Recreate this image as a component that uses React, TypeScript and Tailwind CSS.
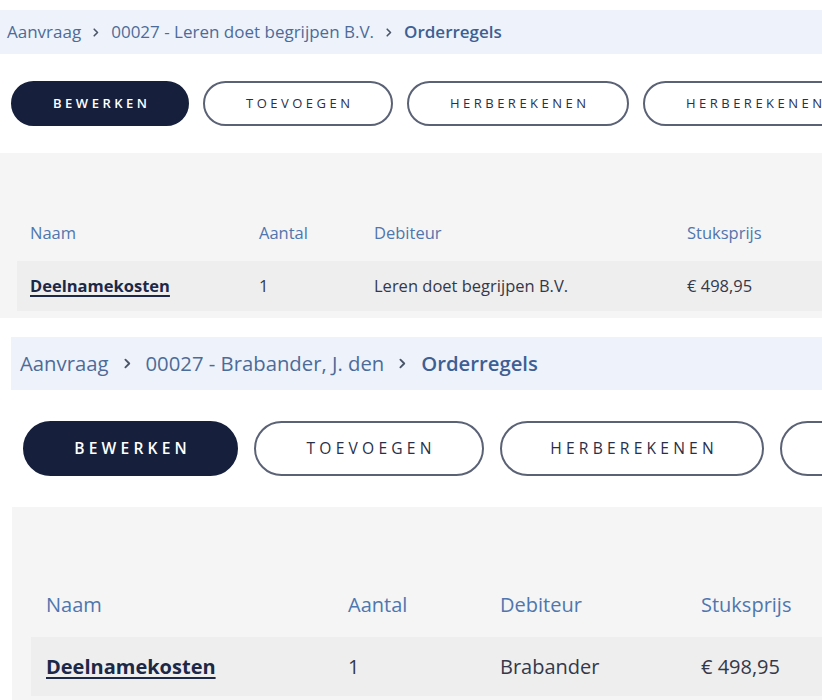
import React from "react";

type Size = "sm" | "lg";

const cls = {
  sm: {
    section: "pt-[10px]",
    band: "h-[44px] pl-[7px] text-[17px]",
    crumbGap: "gap-[12px]",
    chevron: "w-[6px] h-[9px]",
    buttons: "mt-[27px] pl-[11px] gap-[14px]",
    btn: "h-[45px] text-[13px] tracking-[3.5px] border-2",
    panel: "mt-[27px] h-[165px] pt-[68px]",
    head: "h-[24px] text-[16.5px] pl-[30px]",
    row: "mt-[16px] ml-[17px] h-[50px] pl-[13px] text-[16.5px]",
  },
  lg: {
    section: "pt-[19px] pl-[11px]",
    band: "h-[53px] pl-[9px] text-[20.3px]",
    crumbGap: "gap-[15px]",
    chevron: "w-[7px] h-[11px]",
    buttons: "mt-[31px] pl-[12px] gap-[16px]",
    btn: "h-[55px] text-[15.6px] tracking-[4.2px] border-[2.5px]",
    panel: "mt-[31px] ml-[1px] h-[200px] pt-[83px]",
    head: "h-[28px] text-[20px] pl-[34px]",
    row: "mt-[19px] ml-[19px] h-[59px] pl-[15px] text-[20px]",
  },
};

const widths = {
  sm: { btn: ["w-[178px]", "w-[190px]", "w-[222px]", "w-[222px]"], cols: "grid-cols-[229px_115px_313px_1fr]" },
  lg: { btn: ["w-[215px]", "w-[230px]", "w-[264px]", "w-[264px]"], cols: "grid-cols-[302px_152px_201px_1fr]" },
};

function Chevron({ className }: { className: string }) {
  return (
    <svg viewBox="0 0 6 9" className={className} fill="none">
      <path d="M1.2 1.2 4.5 4.5 1.2 7.8" stroke="#4a5568" strokeWidth="1.6" strokeLinecap="round" strokeLinejoin="round" />
    </svg>
  );
}

function OrderPage({ size, client, debtor }: { size: Size; client: string; debtor: string }) {
  const c = cls[size];
  const w = widths[size];
  const labels = ["BEWERKEN", "TOEVOEGEN", "HERBEREKENEN", "HERBEREKENEN"];
  return (
    <section className={c.section}>
      <nav className={`flex items-center bg-[#eef3fb] text-[#4d6b98] ${c.band} ${c.crumbGap}`}>
        <span>Aanvraag</span>
        <Chevron className={c.chevron} />
        <span>00027 - {client}</span>
        <Chevron className={c.chevron} />
        <span className="font-semibold text-[#3d5f93]">Orderregels</span>
      </nav>

      <div className={`flex whitespace-nowrap ${c.buttons}`}>
        {labels.map((label, i) => (
          <button
            key={i}
            className={`shrink-0 rounded-full flex items-center justify-center ${w.btn[i]} ${c.btn} ${
              i === 0
                ? "bg-[#16203c] border-[#16203c] text-white font-semibold"
                : "bg-white border-[#5b6276] text-[#2a2f48] font-normal"
            }`}
          >
            <span className="pl-[0.27em]">{label}</span>
          </button>
        ))}
      </div>

      <div className={`bg-[#f5f5f5] ${c.panel}`}>
        <div className={`grid items-center text-[#4f76ae] ${w.cols} ${c.head}`}>
          <span>Naam</span>
          <span>Aantal</span>
          <span>Debiteur</span>
          <span>Stuksprijs</span>
        </div>
        <div className={`grid items-center bg-[#eeeeee] text-[#34384a] ${c.row} ${w.cols}`}>
          <a className="font-bold text-[#1d2847] underline underline-offset-[3px] decoration-[1.5px]">Deelnamekosten</a>
          <span>1</span>
          <span>{debtor}</span>
          <span>€ 498,95</span>
        </div>
      </div>
    </section>
  );
}

export default function App() {
  return (
    <div className="w-[822px] h-[700px] overflow-hidden bg-white font-['Open_Sans','Noto_Sans',sans-serif]">
      <OrderPage size="sm" client="Leren doet begrijpen B.V." debtor="Leren doet begrijpen B.V." />
      <OrderPage size="lg" client="Brabander, J. den" debtor="Brabander" />
    </div>
  );
}
